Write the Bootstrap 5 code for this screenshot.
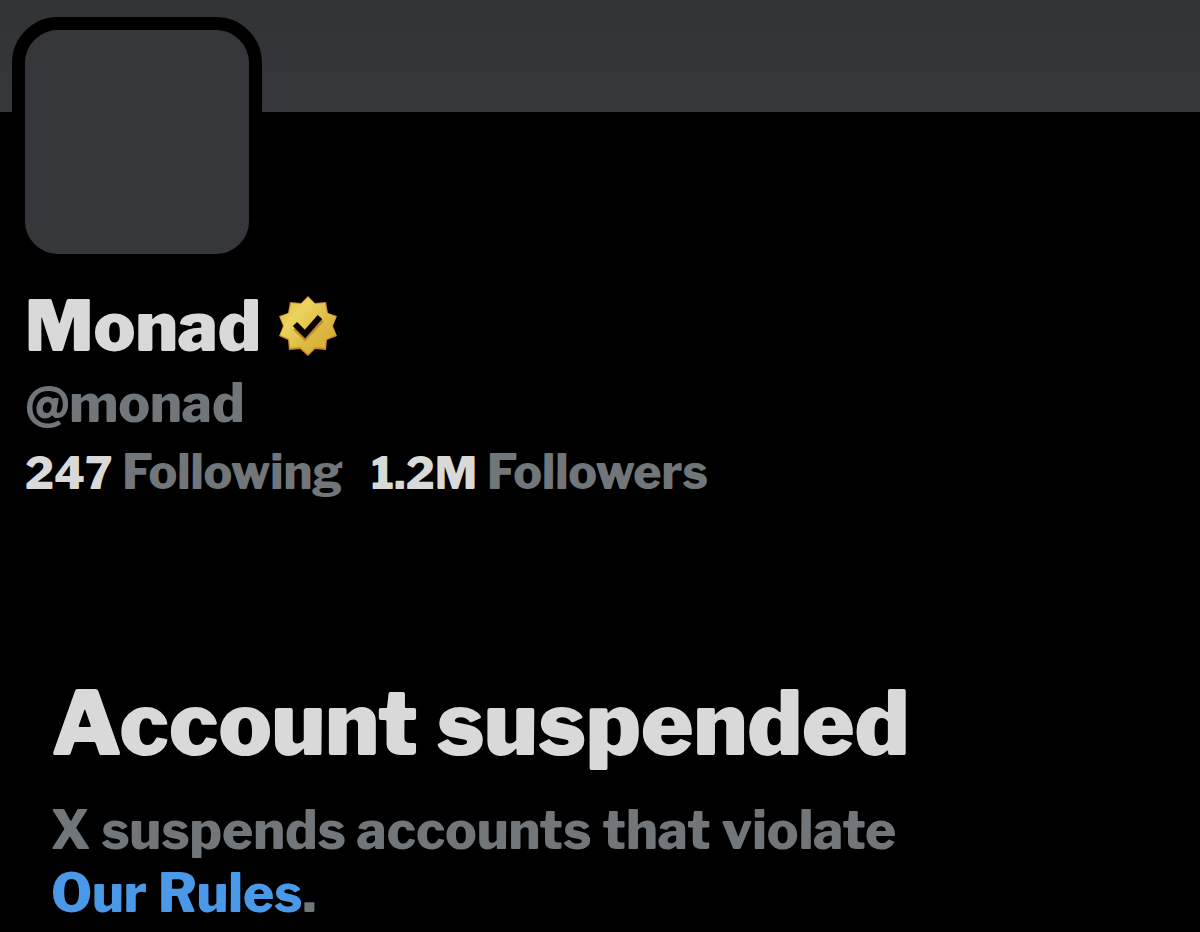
<!DOCTYPE html>
<html lang="en">
<head>
<meta charset="utf-8">
<meta name="viewport" content="width=device-width, initial-scale=1">
<title>Monad (@monad)</title>
<link href="https://cdn.jsdelivr.net/npm/bootstrap@5.3.0/dist/css/bootstrap.min.css" rel="stylesheet">
<style>
body{background:#000;color:#d9d9d9;font-family:"Libre Franklin","Inter",sans-serif;font-weight:800;overflow-x:hidden}
.banner{height:112px;background:linear-gradient(#323337,#36373b)}
.profile{padding:0 12px}
.avatar{width:250px;height:250px;margin-top:-95px;border:13px solid #000;border-radius:46px;background:#36373b}
.info{padding:15px 13px 0}
.display-name{font-size:70px;line-height:88px;font-weight:900;gap:17px}
.verified{width:60px;height:60px}
.handle{font-size:53px;line-height:66px;color:#71767b}
.stats{font-size:48px;line-height:72px;gap:28px}
.stats a{color:#71767b;text-decoration:none}
.stats strong{color:#d9d9d9;font-weight:800;font-size:44px}
.stats a,.stats strong{white-space:nowrap}
.notice{padding:0 51px;margin-top:160px}
.notice h1{font-size:89px;line-height:108px;font-weight:900;margin:0 0 22px}
.notice p{font-size:53px;line-height:63px;color:#71767b;margin:0}
.notice a{color:#4a99e9;text-decoration:none}
</style>
</head>
<body>
<header class="banner"></header>
<main>
<section class="profile">
<div class="avatar position-relative"></div>
<div class="info">
<h2 class="display-name mb-0 d-flex align-items-center">Monad
<svg class="verified" viewBox="0 0 60 60" role="img" aria-label="Verified organization">
<defs><linearGradient id="gold" x1="0" y1="0" x2="1" y2="1"><stop offset="0" stop-color="#d8b43a"/><stop offset=".3" stop-color="#ecd45f"/><stop offset=".65" stop-color="#dcb840"/><stop offset="1" stop-color="#d6a633"/></linearGradient></defs>
<path d="M30 0 37 7 48 6 50 17 59 20 55 30 59 40 49 44 48 54 37 53 30 60 22 53 11 54 10 44 1 40 5 30 1 20 10 17 12 6 23 7Z" fill="#c98932"/>
<path d="M30 1 37 8 47 7 49 17 58 21 54 30 58 39 48 43 47 52 37 51 30 58 22 51 12 52 11 43 2 39 6 30 2 21 11 17 13 7 23 8Z" fill="url(#gold)"/>
<path d="M17 32 27 42 44 24" fill="none" stroke="#c58b35" stroke-width="5"/>
<path d="M17 28 27 38 42 21" fill="none" stroke="#050400" stroke-width="6"/>
</svg></h2>
<div class="handle">@monad</div>
<div class="stats d-flex flex-wrap"><a href="#"><strong>247</strong> Following</a><a href="#"><strong>1.2M</strong> Followers</a></div>
</div>
</section>
<section class="notice">
<h1>Account suspended</h1>
<p>X suspends accounts that violate<br><a href="#">Our Rules</a>.</p>
</section>
</main>
<script src="https://cdn.jsdelivr.net/npm/bootstrap@5.3.0/dist/js/bootstrap.bundle.min.js"></script>
</body>
</html>
